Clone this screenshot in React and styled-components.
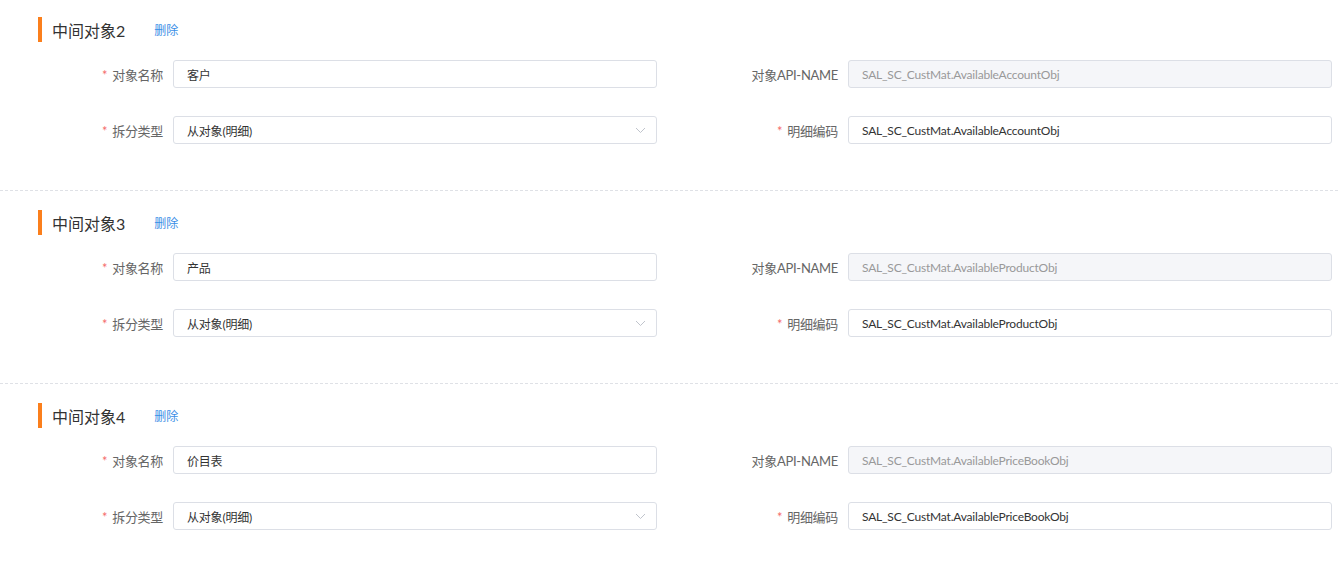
import React from 'react'
import styled, { createGlobalStyle } from 'styled-components'

const GlobalStyle = createGlobalStyle`
  html, body {
    margin: 0;
    padding: 0;
    background: #fff;
    font-family: Lato, 'Noto Sans CJK SC', sans-serif;
  }
`

const sections = [
  {
    title: '中间对象2',
    name: '客户',
    api: 'SAL_SC_CustMat.AvailableAccountObj',
  },
  {
    title: '中间对象3',
    name: '产品',
    api: 'SAL_SC_CustMat.AvailableProductObj',
  },
  {
    title: '中间对象4',
    name: '价目表',
    api: 'SAL_SC_CustMat.AvailablePriceBookObj',
  },
]

const Chevron = () => (
  <svg width="11" height="7" viewBox="0 0 11 7" fill="none">
    <path d="M1 1l4.5 4.5L10 1" stroke="#c0c4cc" strokeWidth="1" />
  </svg>
)

const Field = ({ label, required, value, disabled, select }) => (
  <FieldRow>
    <Label>
      {required && <Star>*</Star>}
      {label}
    </Label>
    <InputBox disabled={disabled}>
      <span>{value}</span>
      {select && <Chevron />}
    </InputBox>
  </FieldRow>
)

const App = () => {
  return (
    <Page>
      <GlobalStyle />
      {sections.map((s) => (
        <Section key={s.title}>
          <Header>
            <Title>{s.title}</Title>
            <Delete>删除</Delete>
          </Header>
          <Grid>
            <Field label="对象名称" required value={s.name} />
            <Field label="对象API-NAME" value={s.api} disabled />
            <Field label="拆分类型" required value="从对象(明细)" select />
            <Field label="明细编码" required value={s.api} />
          </Grid>
        </Section>
      ))}
    </Page>
  )
}

const Page = styled.div`
  width: 1339px;
  height: 564px;
  overflow: hidden;
`
const Section = styled.section`
  padding: 19px 0 47px;
  background: repeating-linear-gradient(to right, #dfe1e6 0 3px, transparent 3px 5px)
    left bottom / 100% 1px no-repeat;
  &:first-child {
    padding-top: 17px;
  }
`
const Header = styled.div`
  display: flex;
  align-items: center;
  height: 25px;
  margin-left: 38px;
  padding-left: 10px;
  border-left: 4px solid #fb7f1c;
  margin-bottom: 18px;
`
const Title = styled.span`
  font-size: 16px;
  color: #333;
`
const Delete = styled.span`
  margin-left: 29px;
  font-size: 12px;
  color: #3a8ee6;
  cursor: pointer;
`
const Grid = styled.div`
  display: grid;
  grid-template-columns: repeat(2, 657px);
  column-gap: 18px;
  row-gap: 28px;
`
const FieldRow = styled.div`
  display: grid;
  grid-template-columns: 163px 484px;
  column-gap: 10px;
  align-items: center;
`
const Label = styled.label`
  text-align: right;
  font-size: 13px;
  letter-spacing: -0.3px;
  color: #666;
`
const Star = styled.span`
  color: #f56c6c;
  margin-right: 5px;
`
const InputBox = styled.div`
  box-sizing: border-box;
  height: 28px;
  display: flex;
  align-items: center;
  justify-content: space-between;
  padding: 0 10px 0 13px;
  border: 1px solid #dcdfe6;
  border-radius: 3px;
  font-size: 12px;
  letter-spacing: -0.2px;
  color: ${(p) => (p.disabled ? '#999' : '#333')};
  background: ${(p) => (p.disabled ? '#f5f6f9' : '#fff')};
`

export default App
